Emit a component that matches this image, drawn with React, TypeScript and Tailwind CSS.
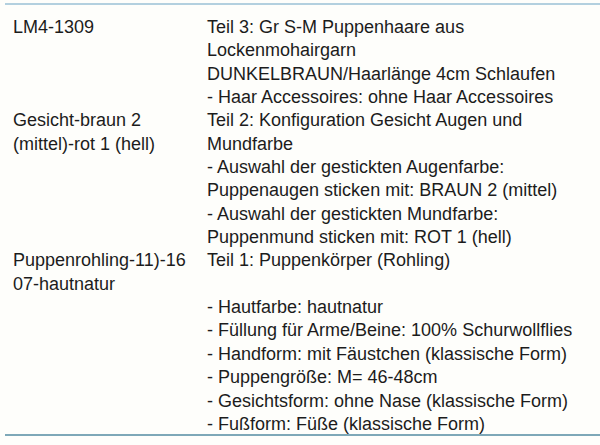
const rows: { label: string[]; lines: string[] }[] = [
  {
    label: ['LM4-1309'],
    lines: [
      'Teil 3: Gr S-M Puppenhaare aus',
      'Lockenmohairgarn',
      'DUNKELBRAUN/Haarlänge 4cm Schlaufen',
      '- Haar Accessoires: ohne Haar Accessoires',
    ],
  },
  {
    label: ['Gesicht-braun 2', '(mittel)-rot 1 (hell)'],
    lines: [
      'Teil 2: Konfiguration Gesicht Augen und',
      'Mundfarbe',
      '- Auswahl der gestickten Augenfarbe:',
      'Puppenaugen sticken mit: BRAUN 2 (mittel)',
      '- Auswahl der gestickten Mundfarbe:',
      'Puppenmund sticken mit: ROT 1 (hell)',
    ],
  },
  {
    label: ['Puppenrohling-11)-16', '07-hautnatur'],
    lines: [
      'Teil 1: Puppenkörper (Rohling)',
      '\u00a0',
      '- Hautfarbe: hautnatur',
      '- Füllung für Arme/Beine: 100% Schurwollflies',
      '- Handform: mit Fäustchen (klassische Form)',
      '- Puppengröße: M= 46-48cm',
      '- Gesichtsform: ohne Nase (klassische Form)',
      '- Fußform: Füße (klassische Form)',
    ],
  },
];

export default function App() {
  return (
    <div className="w-[600px] h-[445px] bg-[#fefefb] overflow-hidden pt-[3px] pl-[5px]">
      <div
        className="h-[433px] overflow-hidden border-t-2 border-b-2 border-t-[#b3d0df] border-b-[#7ea8b8] pt-[11px] pl-[8px] text-[#1c1c1c] text-[18px] leading-[23.35px]"
        style={{ fontFamily: '"Liberation Sans", Arial, sans-serif' }}
      >
        {rows.map((row, i) => (
          <div key={i} className="grid grid-cols-[194px_1fr]">
            <div>
              {row.label.map((l, j) => (
                <div key={j} className="whitespace-nowrap">{l}</div>
              ))}
            </div>
            <div>
              {row.lines.map((l, j) => (
                <div key={j} className="whitespace-nowrap">{l}</div>
              ))}
            </div>
          </div>
        ))}
      </div>
    </div>
  );
}
